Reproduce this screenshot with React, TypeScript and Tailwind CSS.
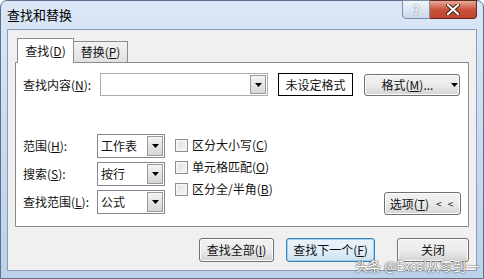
import type { ReactNode } from 'react';

const Arrow = () => (
    <svg width="7" height="4" viewBox="0 0 7 4">
        <path d="M0 0h7L3.5 4z" fill="#000" />
    </svg>
);

const DropButton = () => (
    <div className="w-[16px] m-px flex items-center justify-center border border-[#9a9a9a] bg-gradient-to-b from-[#f4f4f4] to-[#d6d6d6]">
        <Arrow />
    </div>
);

const Combo = ({ value, className }: { value?: string; className: string }) => (
    <div className={`flex bg-white border ${className}`}>
        <div className="flex-1 flex items-center pl-[3px] text-[12px] leading-none">{value}</div>
        <DropButton />
    </div>
);

const Button = ({ children, className = '' }: { children: ReactNode; className?: string }) => (
    <div className={`flex items-center justify-center rounded-[3px] border border-[#707070] bg-gradient-to-b from-[#f2f2f2] via-[#ebebeb] to-[#d4d4d4] text-[12px] leading-none shadow-[inset_0_0_0_1px_#fcfcfc] ${className}`}>
        {children}
    </div>
);

const Check = ({ children }: { children: ReactNode }) => (
    <div className="h-[22px] flex items-center gap-[4px] text-[12px] leading-none">
        <div className="w-[13px] h-[13px] border border-[#8f8f8f] bg-gradient-to-br from-[#dcdcdc] to-[#f8f8f8] shadow-[inset_0_0_0_2px_#f4f4f4]" />
        <span>{children}</span>
    </div>
);

const Label = ({ children, className }: { children: ReactNode; className: string }) => (
    <div className={`text-[12px] leading-none ${className}`}>{children}</div>
);

export default function App() {
    return (
        <div className="w-[484px] h-[279px] overflow-hidden bg-white font-['Noto_Sans_CJK_SC','Liberation_Sans',sans-serif] text-[#111]">
            <div className="relative w-[484px] h-[279px] flex flex-col rounded-t-[7px] border border-[#5b708f] bg-gradient-to-b from-[#dbe7f6] via-[#c9dbf0] to-[#bcd1ea] px-[6px] pb-[7px]">
                {/* title bar */}
                <div className="h-[28px] flex items-start justify-between">
                    <div className="mt-[6px] text-[13px] leading-[16px] text-black">查找和替换</div>
                    <div className="flex -mt-px">
                        <div className="w-[28px] h-[19px] flex items-center justify-center rounded-bl-[4px] border border-[#7a8ca6] bg-gradient-to-b from-[#f1f5fb] via-[#dde6f2] to-[#cbd8ea] text-[13px] font-bold leading-none text-[#f4f6fa] [text-shadow:0_0_2px_#55657d]">
                            ?
                        </div>
                        <div className="w-[47px] h-[19px] flex items-center justify-center rounded-br-[4px] border border-l-0 border-[#5c2a22] bg-gradient-to-b from-[#e9a99a] via-[#c9533d] to-[#c0432c]">
                            <svg width="14" height="11" viewBox="0 0 14 11">
                                <path d="M2 1l10 9M12 1L2 10" stroke="#3a1b15" strokeWidth="4" strokeLinecap="round" />
                                <path d="M2 1l10 9M12 1L2 10" stroke="#fff" strokeWidth="2.2" strokeLinecap="round" />
                            </svg>
                        </div>
                    </div>
                </div>

                {/* client area */}
                <div className="flex-1 flex flex-col border border-[#8a9cb6] bg-[#f0f0f0] pt-[8px] px-[7px]">
                    {/* tabs */}
                    <div className="relative z-10 h-[24px] flex items-end pl-[2px]">
                        <div className="relative top-[1px] h-[25px] w-[57px] flex items-center justify-center border border-b-0 border-[#898c95] bg-white text-[12px] leading-none">
                            查找(<u>D</u>)
                        </div>
                        <div className="h-[21px] w-[54px] flex items-center justify-center border border-l-0 border-b-0 border-[#898c95] bg-gradient-to-b from-[#f3f3f3] to-[#e1e1e1] text-[12px] leading-none">
                            替换(<u>P</u>)
                        </div>
                    </div>

                    {/* tab page */}
                    <div className="h-[165px] flex flex-col border border-[#898c95] bg-white pt-[10px] pl-[7px] pr-[7px]">
                        <div className="flex items-center h-[23px]">
                            <Label className="w-[77px]">查找内容(<u>N</u>):</Label>
                            <Combo className="w-[168px] h-[23px] border-[#abadb3]" />
                            <div className="ml-[10px] w-[75px] h-[23px] flex items-center justify-center border border-black text-[12px] leading-none">
                                未设定格式
                            </div>
                            <Button className="ml-[11px] w-[96px] h-[22px] gap-[18px] pl-[16px]">
                                <span>格式(<u>M</u>)...</span>
                                <Arrow />
                            </Button>
                        </div>

                        <div className="mt-[38px] flex">
                            <div className="flex flex-col gap-[4px]">
                                <div className="flex items-center h-[24px]">
                                    <Label className="w-[74px]">范围(<u>H</u>):</Label>
                                    <Combo value="工作表" className="w-[68px] h-[24px] border-[#828790]" />
                                </div>
                                <div className="flex items-center h-[24px]">
                                    <Label className="w-[74px]">搜索(<u>S</u>):</Label>
                                    <Combo value="按行" className="w-[68px] h-[24px] border-[#828790]" />
                                </div>
                                <div className="flex items-center h-[24px]">
                                    <Label className="w-[74px]">查找范围(<u>L</u>):</Label>
                                    <Combo value="公式" className="w-[68px] h-[24px] border-[#828790]" />
                                </div>
                            </div>
                            <div className="ml-[10px] flex flex-col">
                                <Check>区分大小写(<u>C</u>)</Check>
                                <Check>单元格匹配(<u>O</u>)</Check>
                                <Check>区分全/半角(<u>B</u>)</Check>
                            </div>
                            <Button className="ml-auto self-end mb-[-1px] w-[77px] h-[23px] gap-[7px]">
                                <span>选项(<u>T</u>)</span>
                                <span className="text-[10px] tracking-[2px]">&lt; &lt;</span>
                            </Button>
                        </div>
                    </div>

                    {/* bottom buttons */}
                    <div className="mt-[11px] flex justify-end items-center">
                        <Button className="w-[75px] h-[24px]">查找全部(<u>I</u>)</Button>
                        <div className="ml-[12px] w-[89px] h-[24px] flex items-center justify-center rounded-[3px] border border-[#3c7fb1] bg-gradient-to-b from-[#eaf3fb] via-[#e2eef8] to-[#cfe3f3] shadow-[inset_0_0_0_1px_#9fd3f3] text-[12px] leading-none">
                            查找下一个(<u>F</u>)
                        </div>
                        <Button className="ml-[22px] w-[72px] h-[24px]">关闭</Button>
                    </div>
                </div>

                {/* watermark */}
                <div className="absolute left-[354px] top-[258px] text-[13px] leading-none text-white [text-shadow:0_0_1px_#333,0_0_2px_#555] whitespace-nowrap">
                    头条 @Excel从零到一
                </div>
            </div>
        </div>
    );
}
